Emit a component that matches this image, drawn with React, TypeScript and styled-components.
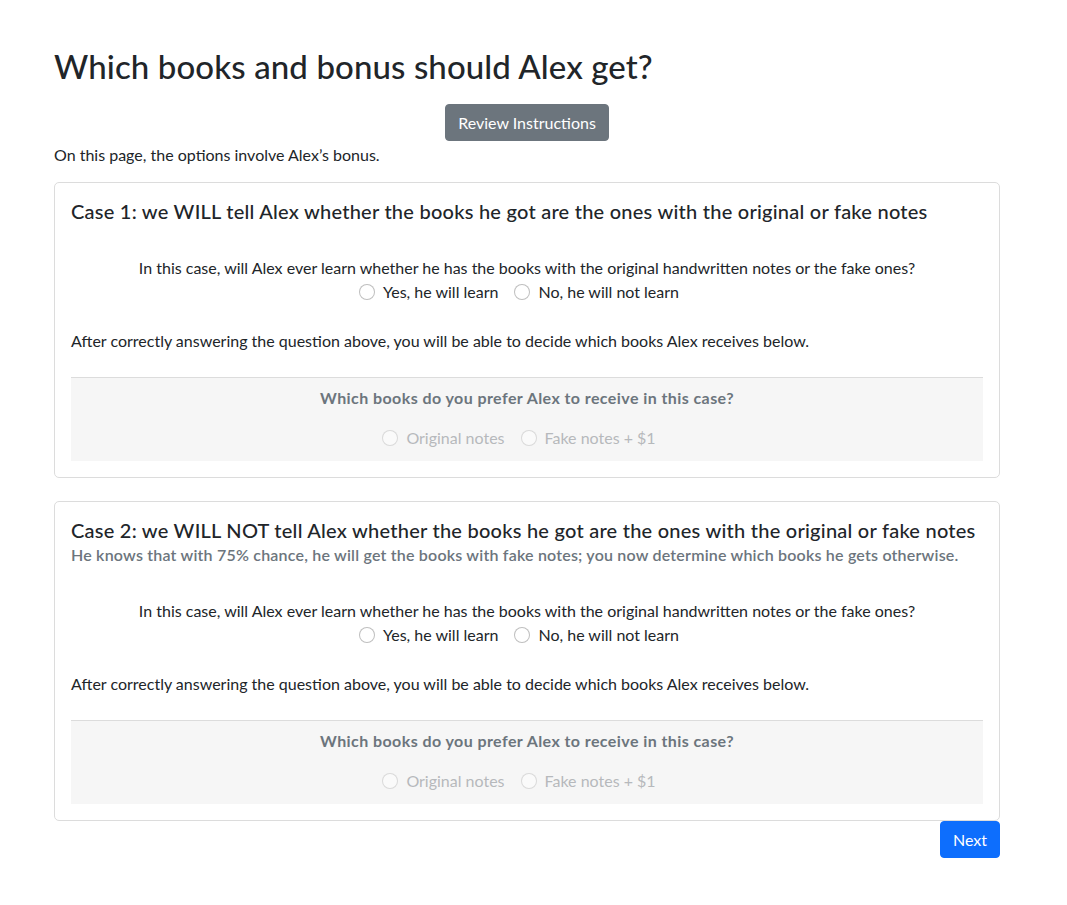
import React from "react";
import styled, { createGlobalStyle } from "styled-components";

const GlobalStyle = createGlobalStyle`
  * { box-sizing: border-box; }
  body {
    margin: 0;
    background: #fff;
    color: #212529;
    font-family: Lato, "Liberation Sans", sans-serif;
    font-size: 16px;
    line-height: 1.5;
  }
`;

const Page = styled.main`
  width: 946px;
  margin-left: 54px;
  padding-top: 47px;
  padding-bottom: 40px;
`;

const Title = styled.h1`
  margin: 0 0 17px;
  font-size: 33px;
  font-weight: 500;
  line-height: 1.2;
  letter-spacing: 0.1px;
`;

const Center = styled.div`
  display: flex;
  justify-content: center;
`;

const Button = styled.button<{ $variant: "primary" | "secondary" }>`
  font-family: inherit;
  font-size: 16px;
  line-height: 1.5;
  padding: 6px 12px;
  height: 37px;
  border-radius: 4px;
  border: 1px solid ${(p) => (p.$variant === "primary" ? "#0d6efd" : "#6c757d")};
  background: ${(p) => (p.$variant === "primary" ? "#0d6efd" : "#6c757d")};
  color: #fff;
  cursor: pointer;
`;

const Intro = styled.p`
  margin: 2px 0 15px;
`;

const Card = styled.section`
  border: 1px solid #dcdcdc;
  border-radius: 5px;
  padding: 16px;
  & + & {
    margin-top: 23px;
  }
`;

const CardTitle = styled.h5`
  margin: 0;
  font-size: 20px;
  font-weight: 500;
  line-height: 24px;
  letter-spacing: 0.24px;
`;

const CardSubtitle = styled.div`
  margin: 1px 0 -1px;
  color: #6c757d;
  font-weight: 600;
  line-height: 24px;
  letter-spacing: 0.2px;
`;

const Question = styled.div`
  margin-top: 33px;
  text-align: center;
`;

const RadioRow = styled.div`
  display: flex;
  justify-content: center;
`;

const Option = styled.label<{ $disabled?: boolean }>`
  display: inline-flex;
  align-items: center;
  margin-right: 16px;
  color: ${(p) => (p.$disabled ? "#b6b9bc" : "inherit")};
  cursor: ${(p) => (p.$disabled ? "default" : "pointer")};
`;

const Radio = styled.input.attrs({ type: "radio" })`
  appearance: none;
  width: 16px;
  height: 16px;
  margin: 0 8px 0 0;
  border: 1px solid rgba(0, 0, 0, 0.25);
  border-radius: 50%;
  background: #fff;
  flex: none;
  &:disabled {
    opacity: 0.5;
  }
`;

const Note = styled.p`
  margin: 25px 0 24px;
`;

const Choice = styled.div`
  background: #f6f6f6;
  border-top: 1px solid #dcdcdc;
  padding: 8px 0 11px;
  text-align: center;
`;

const ChoiceTitle = styled.div`
  color: #6c757d;
  font-weight: 700;
  letter-spacing: 0.42px;
  margin-bottom: 16px;
`;

const Footer = styled.div`
  display: flex;
  justify-content: flex-end;
`;

type CaseProps = {
  title: string;
  subtitle?: string;
  name: string;
};

function CaseCard({ title, subtitle, name }: CaseProps) {
  return (
    <Card>
      <CardTitle>{title}</CardTitle>
      {subtitle && <CardSubtitle>{subtitle}</CardSubtitle>}
      <Question>
        <div>
          In this case, will Alex ever learn whether he has the books with the original handwritten notes or the fake ones?
        </div>
        <RadioRow>
          <Option>
            <Radio name={`${name}-learn`} />
            Yes, he will learn
          </Option>
          <Option>
            <Radio name={`${name}-learn`} />
            No, he will not learn
          </Option>
        </RadioRow>
      </Question>
      <Note>After correctly answering the question above, you will be able to decide which books Alex receives below.</Note>
      <Choice>
        <ChoiceTitle>Which books do you prefer Alex to receive in this case?</ChoiceTitle>
        <RadioRow>
          <Option $disabled>
            <Radio name={`${name}-books`} disabled />
            Original notes
          </Option>
          <Option $disabled>
            <Radio name={`${name}-books`} disabled />
            Fake notes + $1
          </Option>
        </RadioRow>
      </Choice>
    </Card>
  );
}

export default function App() {
  return (
    <Page>
      <GlobalStyle />
      <Title>Which books and bonus should Alex get?</Title>
      <Center>
        <Button $variant="secondary">Review Instructions</Button>
      </Center>
      <Intro>On this page, the options involve Alex’s bonus.</Intro>
      <CaseCard
        name="case1"
        title="Case 1: we WILL tell Alex whether the books he got are the ones with the original or fake notes"
      />
      <CaseCard
        name="case2"
        title="Case 2: we WILL NOT tell Alex whether the books he got are the ones with the original or fake notes"
        subtitle="He knows that with 75% chance, he will get the books with fake notes; you now determine which books he gets otherwise."
      />
      <Footer>
        <Button $variant="primary">Next</Button>
      </Footer>
    </Page>
  );
}
